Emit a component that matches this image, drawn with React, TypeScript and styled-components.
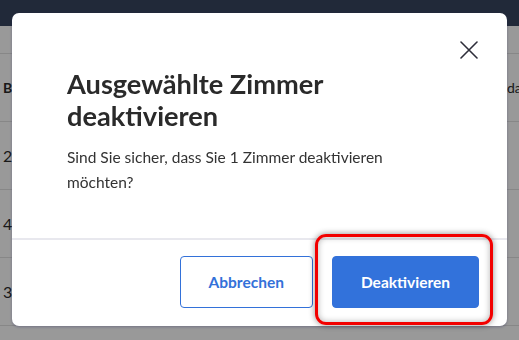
import styled, { createGlobalStyle } from 'styled-components'

const GlobalStyle = createGlobalStyle`
  html, body {
    margin: 0;
    padding: 0;
    overflow: hidden;
    background: #ffffff;
    font-family: Lato, 'Liberation Sans', Arial, sans-serif;
  }
`

const Page = styled.div`
  width: 519px;
  height: 340px;
  overflow: hidden;
`

const TopBar = styled.div`
  height: 26px;
  background: #38455f;
`

const Toolbar = styled.div`
  height: 27px;
  border-bottom: 1px solid #e2e2e2;
`

const Row = styled.div<{ $head?: boolean }>`
  height: 67px;
  border-bottom: 1px solid #e2e2e2;
  display: flex;
  align-items: center;
  justify-content: space-between;
  padding: 0 0 0 3px;
  font-size: ${(p) => (p.$head ? '14px' : '16px')};
  font-weight: ${(p) => (p.$head ? 700 : 400)};
  color: #2b2b2b;
  white-space: nowrap;
`

const Cell = styled.span`
  width: 10px;
  overflow: visible;
`

const RightCell = styled.span`
  width: 12px;
  font-weight: 400;
`

const Backdrop = styled.div`
  position: fixed;
  inset: 0;
  background: rgba(0, 0, 0, 0.4);
`

const Modal = styled.div`
  position: fixed;
  left: 12px;
  top: 13px;
  width: 495px;
  height: 313px;
  background: #ffffff;
  border-radius: 7px;
  box-shadow: 0 1px 3px rgba(40, 40, 90, 0.35);
  display: flex;
  flex-direction: column;
`

const Body = styled.div`
  position: relative;
  padding: 55px 80px 0 55px;
  flex: 1;
`

const CloseButton = styled.button`
  position: absolute;
  top: 24px;
  right: 25px;
  width: 26px;
  height: 26px;
  border: none;
  background: none;
  padding: 0;
  display: flex;
  align-items: center;
  justify-content: center;
  cursor: pointer;
`

const Title = styled.h2`
  margin: 0;
  font-size: 27.2px;
  line-height: 32px;
  font-weight: 700;
  color: #2a2a2a;
  max-width: 360px;
`

const Text = styled.p`
  margin: 13px 0 0;
  font-size: 15.5px;
  line-height: 25px;
  color: #333333;
  max-width: 360px;
`

const Footer = styled.div`
  border-top: 2px solid #e8e8ee;
  padding: 16px 28px 18px 0;
  display: flex;
  justify-content: flex-end;
  gap: 19px;
`

const Button = styled.button<{ $primary?: boolean }>`
  height: 52px;
  padding: 0 28px;
  border-radius: 4px;
  font-family: Lato, 'Liberation Sans', Arial, sans-serif;
  font-size: 15.5px;
  font-weight: 700;
  cursor: pointer;
  border: 1px solid #3371d9;
  background: ${(p) => (p.$primary ? '#3272db' : '#ffffff')};
  color: ${(p) => (p.$primary ? '#ffffff' : '#3371d9')};
`

const Highlight = styled.div`
  position: relative;
  display: flex;
`

const HighlightRing = styled.span`
  position: absolute;
  left: -17px;
  right: -14px;
  top: -22px;
  bottom: -17px;
  border: 3px solid #f20000;
  border-radius: 11px;
  box-shadow: 0 0 6px rgba(0, 0, 0, 0.45), inset 0 0 6px rgba(0, 0, 0, 0.3);
  pointer-events: none;
`

const CloseIcon = () => (
  <svg width="18" height="18" viewBox="0 0 18 18" fill="none">
    <path d="M1 1L17 17M17 1L1 17" stroke="#2e2e3a" strokeWidth="1.6" strokeLinecap="round" />
  </svg>
)

const App = () => (
  <Page>
    <GlobalStyle />
    <TopBar />
    <Toolbar />
    <Row $head>
      <Cell>B</Cell>
      <RightCell>da</RightCell>
    </Row>
    <Row>
      <Cell>2</Cell>
    </Row>
    <Row>
      <Cell>4</Cell>
    </Row>
    <Row>
      <Cell>3</Cell>
    </Row>
    <Backdrop />
    <Modal role="dialog">
      <Body>
        <CloseButton aria-label="Schließen">
          <CloseIcon />
        </CloseButton>
        <Title>Ausgewählte Zimmer deaktivieren</Title>
        <Text>Sind Sie sicher, dass Sie 1 Zimmer deaktivieren möchten?</Text>
      </Body>
      <Footer>
        <Button>Abbrechen</Button>
        <Highlight>
          <Button $primary>Deaktivieren</Button>
          <HighlightRing />
        </Highlight>
      </Footer>
    </Modal>
  </Page>
)

export default App
